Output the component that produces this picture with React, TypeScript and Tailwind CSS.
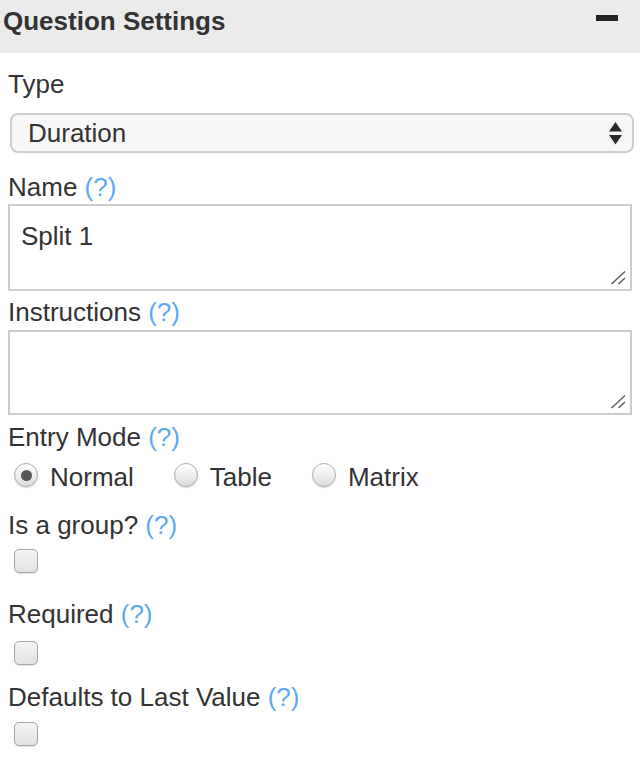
import React from "react";

const HELP = "text-[#5fa8f2]";

function Label({ text, help = true, className = "" }: { text: string; help?: boolean; className?: string }) {
  return (
    <div className={`text-[26px] leading-[30px] text-[#333] ${className}`}>
      {text}
      {help && <span className={HELP}> (?)</span>}
    </div>
  );
}

function ResizeGrip() {
  return (
    <svg className="absolute right-[4px] bottom-[4px]" width="16" height="15" viewBox="0 0 16 15">
      <line x1="1.5" y1="14" x2="15" y2="1.5" stroke="#5a5a5a" strokeWidth="1.4" />
      <line x1="8.5" y1="14" x2="15" y2="8" stroke="#5a5a5a" strokeWidth="1.4" />
    </svg>
  );
}

function Radio({ checked }: { checked?: boolean }) {
  return (
    <span className="mt-[1px] flex h-[24px] w-[24px] shrink-0 items-center justify-center rounded-full border border-[#adadad] bg-gradient-to-b from-[#ffffff] to-[#dcdcdc] shadow-[0_1px_1px_rgba(0,0,0,0.15)]">
      {checked && <span className="h-[11px] w-[11px] rounded-full bg-[#575757]" />}
    </span>
  );
}

function Checkbox({ className = "" }: { className?: string }) {
  return (
    <span
      className={`block h-[24px] w-[24px] rounded-[5px] border border-[#a5a5a5] bg-gradient-to-b from-[#f4f4f4] to-[#e2e2e2] shadow-[0_1px_1px_rgba(0,0,0,0.12)] ${className}`}
    />
  );
}

const MODES = [
  { label: "Normal", checked: true },
  { label: "Table", checked: false },
  { label: "Matrix", checked: false },
];

export default function App() {
  return (
    <div className="w-[640px] h-[766px] bg-white font-['Liberation_Sans',Arial,sans-serif] text-[#333]">
      <div className="flex h-[53px] items-start justify-between bg-[#ebebeb] pl-[3px]">
        <h2 className="mt-[6px] text-[26px] font-bold leading-[30px] text-[#333]">Question Settings</h2>
        <span className="mr-[22px] mt-[15px] block h-[6px] w-[22px] bg-[#222]" />
      </div>

      <div className="px-2">
        <Label text="Type" help={false} className="mt-[16px]" />
        <div className="ml-[2px] mt-[14px] flex h-[40px] w-[624px] items-center justify-between rounded-[8px] border-2 border-[#cdcdcd] bg-[#f7f7f7] pl-[16px] pr-[10px]">
          <span className="text-[26px] leading-[30px] text-[#333]">Duration</span>
          <svg width="13" height="23" viewBox="0 0 13 23">
            <polygon points="6.5,0 13,9.5 0,9.5" fill="#2a2a2a" />
            <polygon points="0,13 13,13 6.5,22.5" fill="#2a2a2a" />
          </svg>
        </div>

        <Label text="Name" className="mt-[19px]" />
        <div className="relative mt-[2px] h-[87px] w-[624px] border-2 border-[#cccccc] bg-white">
          <div className="pl-[11px] pt-[15px] text-[26px] leading-[30px] text-[#333]">Split 1</div>
          <ResizeGrip />
        </div>

        <Label text="Instructions" className="mt-[6px]" />
        <div className="relative mt-[3px] h-[85px] w-[624px] border-2 border-[#cccccc] bg-white">
          <ResizeGrip />
        </div>

        <Label text="Entry Mode" className="mt-[7px]" />
        <div className="ml-[6px] mt-[10px] flex items-start gap-[40px]">
          {MODES.map(m => (
            <label key={m.label} className="flex items-start gap-[12px]">
              <Radio checked={m.checked} />
              <span className="text-[26px] leading-[30px] text-[#333]">{m.label}</span>
            </label>
          ))}
        </div>

        <Label text="Is a group?" className="mt-[18px]" />
        <Checkbox className="ml-[6px] mt-[9px]" />

        <Label text="Required" className="mt-[26px]" />
        <Checkbox className="ml-[6px] mt-[12px]" />

        <Label text="Defaults to Last Value" className="mt-[17px]" />
        <Checkbox className="ml-[6px] mt-[10px]" />
      </div>
    </div>
  );
}
